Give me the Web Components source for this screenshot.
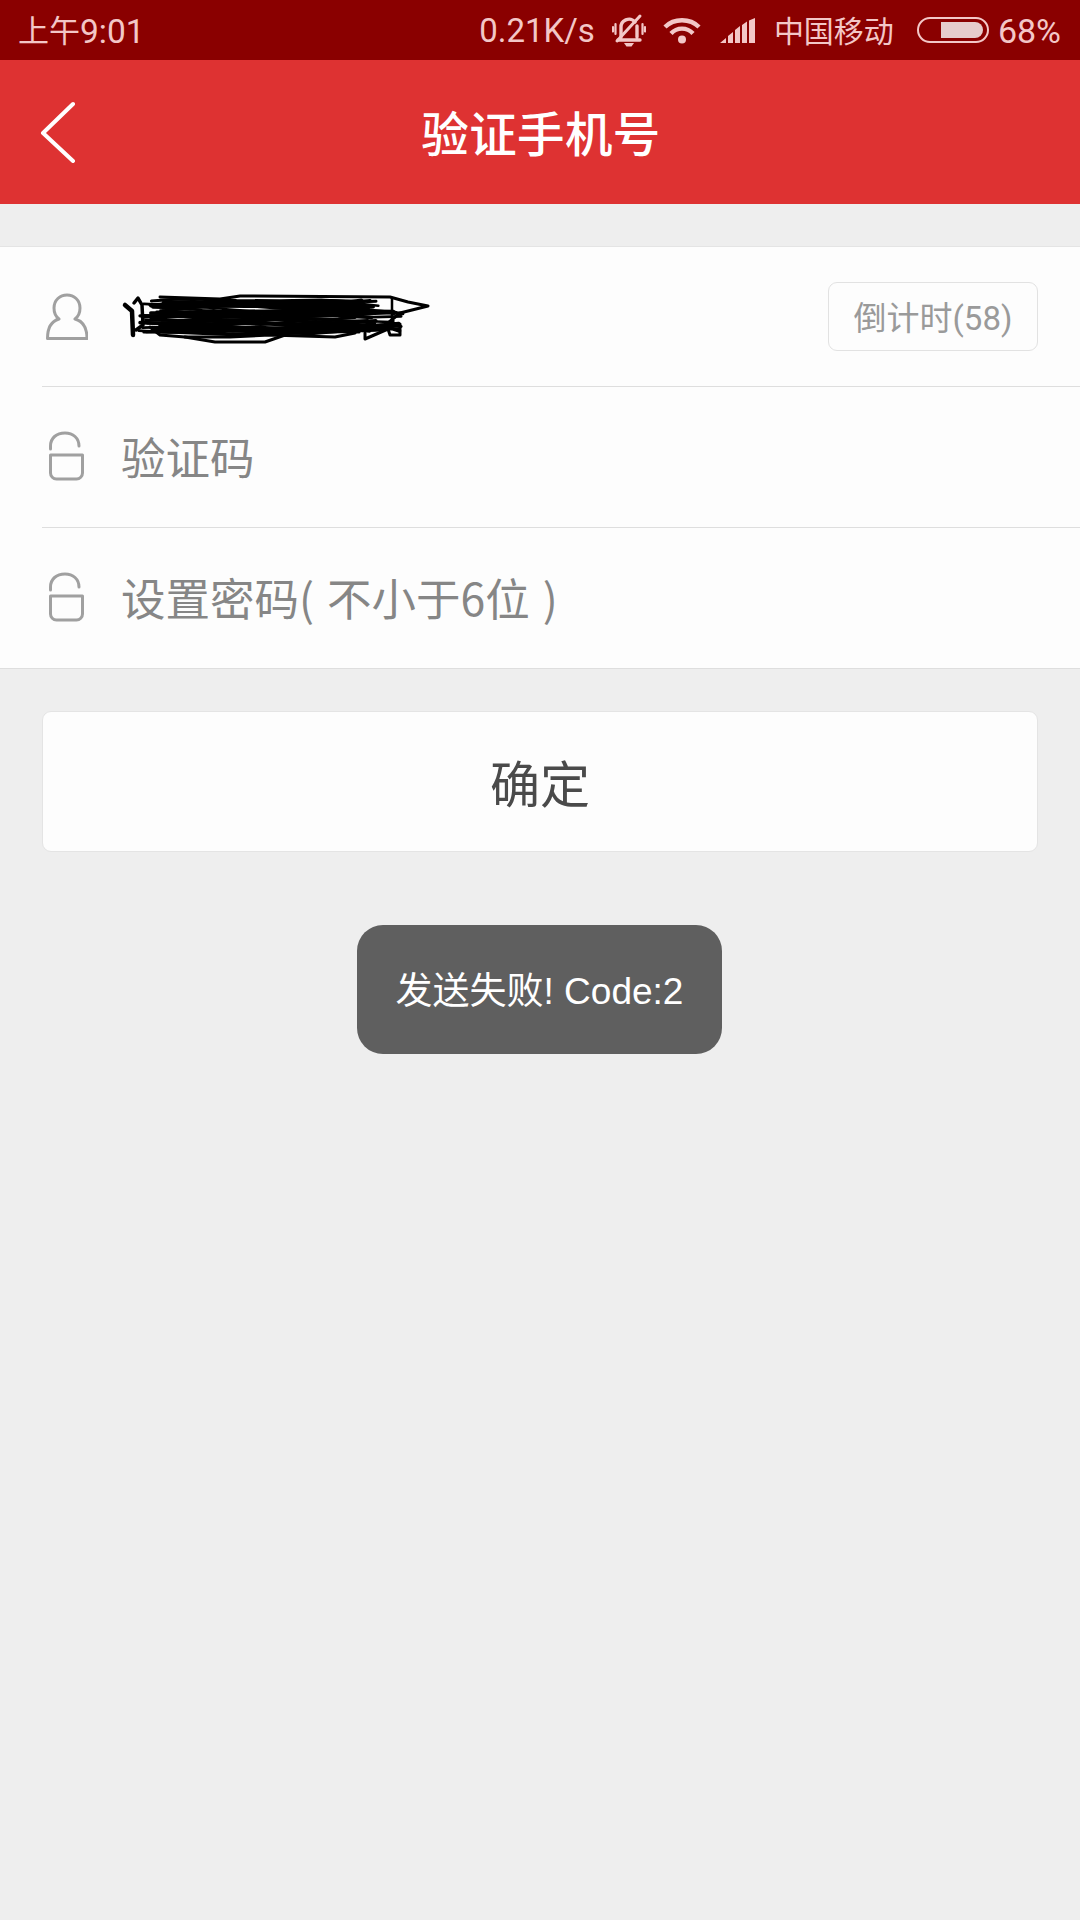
<!DOCTYPE html>
<html lang="zh-CN">
<head>
<meta charset="utf-8">
<title>验证手机号</title>
<style>
html,body{margin:0;padding:0;background:#eeeeee}
body{width:1080px;height:1920px;overflow:hidden;font-family:"Noto Sans CJK SC",sans-serif}
</style>
</head>
<body>
<phone-page>
  <status-bar></status-bar>
  <title-bar>验证手机号</title-bar>
  <form-panel>
    <form-row icon="user" class="first" style="height:139px">
      <redacted-scribble></redacted-scribble>
      <count-button slot="end">倒计时(58)</count-button>
    </form-row>
    <form-row icon="lock">验证码</form-row>
    <form-row icon="lock" last>设置密码( 不小于6位 )</form-row>
  </form-panel>
  <action-button>确定</action-button>
  <toast-box>发送失败! Code:2</toast-box>
</phone-page>
<script>
function def(name, html, setup){
  customElements.define(name, class extends HTMLElement{
    constructor(){super();const r=this.attachShadow({mode:'open'});r.innerHTML=html;}
    connectedCallback(){if(setup)setup(this,this.shadowRoot);}
  });
}
def('phone-page',`<style>:host{display:flex;flex-direction:column;position:relative;width:1080px;height:1920px;background:#eeeeee}</style><slot></slot>`);

def('status-bar',`<style>
:host{display:flex;align-items:center;height:60px;background:#8a0000;color:#f3c7c7;box-sizing:border-box;padding:0 19px 0 18px;font:400 33px/60px Roboto,"Noto Sans CJK SC",sans-serif;flex:none}
span{white-space:nowrap;position:relative;top:1px}
.cn{font-family:"Noto Sans CJK SC",sans-serif;font-size:30px;top:-1px}
svg{display:block;flex:none}
.sp{flex:1}
</style>
<span><span style="font-family:'Noto Sans CJK SC',sans-serif;font-size:31px;top:-1px">上午</span><span style="font-size:33.500px;top:0">9:01</span></span>
<div class="sp"></div>
<span>0.21K/s</span>
<svg style="margin-left:17px" width="34" height="34" viewBox="0 0 34 34" fill="none" stroke="#f3c7c7" stroke-width="3.400" stroke-linecap="round">
  <path d="M9 24V15a8 8 0 0 1 14-6M25 13V24M6 27H28"/>
  <path d="M5 28L28 3" stroke-width="3"/>
  <path d="M3.500 11V21M1 14V18.500M30.500 11V21M33 14V18.500" stroke-width="2.200"/>
  <path d="M12 30H22L19.500 33.500H14.500Z" fill="#f3c7c7" stroke="none"/>
</svg>
<svg style="margin-left:17px" width="38" height="27" viewBox="0 0 38 27" fill="none" stroke="#f3c7c7" stroke-width="4.400">
  <path d="M2 10C11 1 27 1 36 10"/>
  <path d="M8 16.500C14 10 24 10 30 16.500"/>
  <circle cx="19" cy="22.500" r="4" fill="#f3c7c7" stroke="none"/>
</svg>
<svg style="margin-left:19px" width="36" height="25" viewBox="0 0 36 25" fill="#f3c7c7">
  <path d="M0 25L6 20V25ZM8 25V18L13 14V25ZM15 25V12L20 8V25ZM22 25V7L27 3.500V25ZM29 25V2.500L35 0V25Z"/>
</svg>
<span class="cn" style="margin-left:18px">中国移动</span>
<svg style="margin-left:23px" width="72" height="26" viewBox="0 0 72 26">
  <rect x="1" y="1" width="70" height="24" rx="12" fill="none" stroke="#f3c7c7" stroke-width="2"/>
  <path d="M24 5H58a8 8 0 0 1 8 8a8 8 0 0 1-8 8H24Z" fill="#e6cccc"/>
</svg>
<span style="margin-left:9px;font-size:34px">68%</span>`);

def('title-bar',`<style>
:host{display:grid;grid-template-columns:120px 1fr 120px;align-items:center;height:144px;background:#de3232;color:#fff;font:500 47.500px/1 "Noto Sans CJK SC",sans-serif;flex:none}
svg{display:block;margin-left:40px}
.c{text-align:center;position:relative;top:0;padding-left:2px;letter-spacing:.4px}
</style>
<svg width="36" height="62" viewBox="0 0 36 62" fill="none" stroke="#fff" stroke-width="4" stroke-linecap="round" stroke-linejoin="round"><path d="M33 3L3 32L33 60"/></svg>
<div class="c"><slot></slot></div><div></div>`);

def('form-panel',`<style>:host{display:block;margin-top:42px;background:#fdfdfd;border-top:1px solid #e4e4e4;border-bottom:1px solid #dedede;flex:none}</style><slot></slot>`);

const ICONS={
 user:`<svg width="42" height="48" viewBox="0 0 42 48" fill="none" stroke="#a0a0a0" stroke-width="3" stroke-linejoin="round"><path d="M13 26C9 23 8 19 8 15C8 7 14 2 21 2C28 2 34 7 34 15C34 19 33 23 29 26C36 28 41 34 41 45.500H1.500C1.500 34 6 28 13 26Z"/></svg>`,
 lock:`<svg style="margin-top:-3px" width="42" height="50" viewBox="0 0 42 50" fill="none" stroke="#a0a0a0" stroke-width="3" stroke-linecap="round" stroke-linejoin="round"><path d="M4.500 18V15C4.500 7 10.500 2 19 2C27 2 33 7 33 15"/><path d="M5 24H37V42a6 6 0 0 1-6 6H11a6 6 0 0 1-6-6Z" transform="translate(-.5 0)"/></svg>`
};
def('form-row',`<style>
:host{display:flex;align-items:center;height:140px;margin-left:42px;border-bottom:1px solid #dedede;padding-right:42px;color:#868686;font:400 44.500px/1 "Noto Sans CJK SC",sans-serif;word-spacing:3px;white-space:nowrap}
:host([last]){border-bottom:0}
.i{width:79px;flex:none;display:flex;padding-left:4px;box-sizing:border-box}
.i svg{display:block}
.m{flex:1;display:flex;align-items:center;position:relative;top:-1px}
</style><div class="i"></div><div class="m"><slot></slot></div><slot name="end"></slot>`,
 (el,r)=>{r.querySelector('.i').innerHTML=ICONS[el.getAttribute('icon')];});

def('redacted-scribble',`<style>:host{display:block;width:310px;height:60px;margin-left:-1px;position:relative;top:-1px}svg{display:block}</style>
<svg width="310" height="60" viewBox="0 0 310 60" fill="none" stroke="#000" stroke-width="3" stroke-linejoin="round" stroke-linecap="round">
<path d="M40 12L100 14L120 11L270 12L288 17L308 21L280 28L268 38L280 39L280 50L270 50L268 44L245 54L245 48"/>
<path d="M5 20L12 26L13 50" stroke-width="4.500"/>
<path d="M14 18L18 13L22 20L23 40L16 45" stroke-width="3.500"/>
<path d="M30 42L40 50L65 52L110 52L150 50L215 52L235 48"/>
<path d="M65 52L95 57L145 57L165 50"/>
<path d="M272 13L272 40" stroke-width="2.500"/>
<g id="ink"></g>
</svg>`,(el,r)=>{
  let s=11;const rnd=()=>(s=(s*16807)%2147483647)/2147483647;
  let out='';
  for(let i=0;i<34;i++){
    const y=16+i%16*2+rnd()*2;
    const x0=18+rnd()*30, x1=235+rnd()*48;
    let d='M'+x0.toFixed(1)+' '+y.toFixed(1);
    for(let x=x0+30;x<x1;x+=25+rnd()*35){
      d+='L'+x.toFixed(1)+' '+(y+(rnd()-.5)*5).toFixed(1);
    }
    d+='L'+x1.toFixed(1)+' '+(y+(rnd()-.5)*4).toFixed(1);
    out+='<path d="'+d+'" stroke-width="'+(2.200+rnd()*1.4).toFixed(1)+'"/>';
  }
  r.getElementById('ink').innerHTML=out;
});

def('count-button',`<style>
:host{display:flex;align-items:center;justify-content:center;box-sizing:border-box;width:210px;height:69px;padding-top:3px;border:1.500px solid #e2e2e2;border-radius:9px;color:#9a9a9a;font:400 33px/1 Roboto,"Noto Sans CJK SC",sans-serif;word-spacing:0;flex:none;white-space:nowrap}
</style><slot></slot>`);

def('action-button',`<style>
:host{display:flex;align-items:center;justify-content:center;box-sizing:border-box;height:141px;margin:42px 42px 0;padding-bottom:2px;background:#fdfdfd;border:1.500px solid #e4e4e4;border-radius:9px;color:#4a4a4a;font:400 50px/1 "Noto Sans CJK SC",sans-serif;flex:none}
</style><slot></slot>`);

def('toast-box',`<style>
:host{position:absolute;left:357px;top:925px;width:365px;height:129px;padding-top:3px;box-sizing:border-box;display:flex;align-items:center;justify-content:center;background:#5f5f5f;border-radius:26px;color:#fff;font:400 37px/1 "Liberation Sans","Noto Sans CJK SC",sans-serif;white-space:nowrap}
</style><slot></slot>`);
</script>
</body>
</html>
